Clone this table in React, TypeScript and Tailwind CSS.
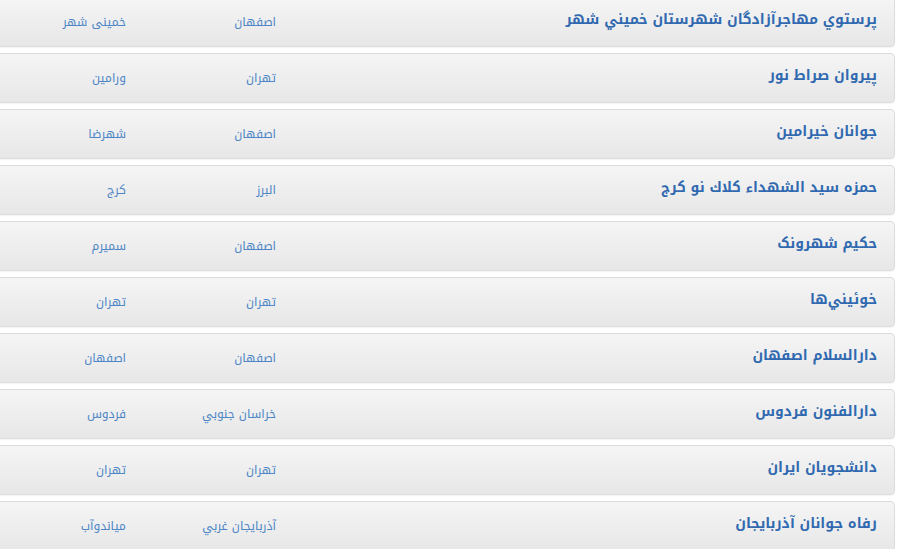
import React from "react";

const rows: [string, string, string][] = [
  ["پرستوي مهاجرآزادگان شهرستان خميني شهر", "اصفهان", "خمينی شهر"],
  ["پيروان صراط نور", "تهران", "ورامين"],
  ["جوانان خيرامين", "اصفهان", "شهرضا"],
  ["حمزه سيد الشهداء كلاك نو كرج", "البرز", "كرج"],
  ["حكيم شهرونک", "اصفهان", "سميرم"],
  ["خوئيني\u200cها", "تهران", "تهران"],
  ["دارالسلام اصفهان", "اصفهان", "اصفهان"],
  ["دارالفنون فردوس", "خراسان جنوبي", "فردوس"],
  ["دانشجويان ايران", "تهران", "تهران"],
  ["رفاه جوانان آذربايجان", "آذربايجان غربي", "مياندوآب"],
];

export default function App() {
  return (
    <div
      className="w-[900px] h-[549px] overflow-hidden bg-white"
      style={{ fontFamily: '"Noto Kufi Arabic", "DejaVu Sans", sans-serif' }}
    >
      <div dir="rtl" className="-mt-[3px] -ml-[6px] mr-[5px] flex flex-col gap-[6px]">
        {rows.map(([name, prov, city], i) => (
          <div
            key={i}
            className="h-[50px] flex items-center rounded-[4px] border border-[#dcdcdc] bg-gradient-to-b from-[#f5f5f5] to-[#e7e7e7] shadow-[0_1px_1px_rgba(0,0,0,0.04)]"
          >
            <div className="flex-1 pr-[17px] pb-[5px] text-[14px] font-bold text-[#3069b0] whitespace-nowrap">
              {name}
            </div>
            <div className="w-[150px] text-[12px] text-[#4d86c6] whitespace-nowrap">{prov}</div>
            <div className="w-[131px] text-[12px] text-[#4d86c6] whitespace-nowrap">{city}</div>
          </div>
        ))}
      </div>
    </div>
  );
}
